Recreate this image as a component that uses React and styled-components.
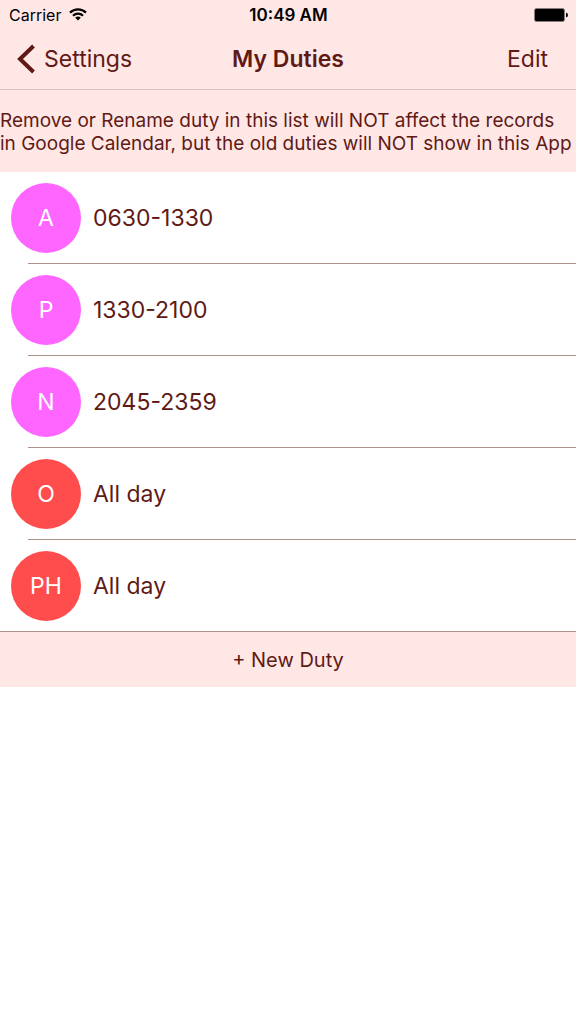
import React from "react";
import styled, { createGlobalStyle } from "styled-components";

const GlobalStyle = createGlobalStyle`
  * { box-sizing: border-box; }
  body {
    margin: 0;
    background: #fff;
    color: #5f1a15;
    font-family: Inter, "Liberation Sans", sans-serif;
  }
  button { font: inherit; color: inherit; border: 0; padding: 0; background: none; cursor: pointer; }
`;

const Header = styled.header`
  background: #ffe7e6;
  border-bottom: 1px solid #d9c3c3;
`;

const StatusBar = styled.div`
  display: grid;
  grid-template-columns: 1fr auto 1fr;
  align-items: center;
  height: 29px;
  padding: 0 8px 0 9px;
  color: #000;
  font-size: 16px;
  line-height: 20px;
`;

const Carrier = styled.div`
  display: flex;
  align-items: center;
  gap: 8px;
`;

const Clock = styled.time`
  font-size: 17px;
  font-weight: 600;
`;

const Battery = styled.svg`
  justify-self: end;
`;

const NavBar = styled.nav`
  display: grid;
  grid-template-columns: 1fr auto 1fr;
  align-items: center;
  height: 60px;
  padding: 0 16px;
  font-size: 23px;
  line-height: 28px;
`;

const BackButton = styled.button`
  display: flex;
  align-items: center;
  gap: 8px;
  justify-self: start;
`;

const EditButton = styled.button`
  && { padding: 0 12px; }
  justify-self: end;
`;

const Title = styled.h1`
  margin: 0;
  font-size: 23px;
  font-weight: 600;
`;

const Notice = styled.p`
  margin: 0;
  padding: 19px 2px 17px 0;
  background: #ffe7e6;
  font-size: 19px;
  line-height: 23px;
`;

const DutyList = styled.ul`
  margin: 0;
  padding: 0;
  list-style: none;
`;

const DutyItem = styled.li`
  &::after {
    content: "";
    display: block;
    height: 1px;
    margin-left: 28px;
    background: #b08f8f;
  }
  &:last-child::after { margin-left: 0; }
`;

const DutyRow = styled.div`
  display: flex;
  align-items: center;
  gap: 12px;
  padding: 11px 11px 10px;
  font-size: 23px;
`;

const Badge = styled.span`
  display: grid;
  place-items: center;
  width: 70px;
  height: 70px;
  border-radius: 50%;
  background: ${(p) => p.$color};
  color: #fff;
`;

const NewDuty = styled.button`
  display: block;
  width: 100%;
  height: 55px;
  && {
    background: #ffe7e6;
    font-size: 20px;
  }
`;

const duties = [
  { code: "A", hours: "0630-1330", color: "#ff66ff" },
  { code: "P", hours: "1330-2100", color: "#ff66ff" },
  { code: "N", hours: "2045-2359", color: "#ff66ff" },
  { code: "O", hours: "All day", color: "#ff4d4d" },
  { code: "PH", hours: "All day", color: "#ff4d4d" },
];

export default function App() {
  return (
    <>
      <GlobalStyle />
      <Header>
        <StatusBar>
          <Carrier>
            Carrier
            <svg width="18" height="13" viewBox="0 0 18 13" fill="none" stroke="#000" strokeWidth="2.2" aria-hidden="true">
              <path d="M1 4.6a11.4 11.4 0 0 1 16 0M4 7.7a7.2 7.2 0 0 1 10 0" />
              <path d="M9 12.6 6.2 9.8a4 4 0 0 1 5.6 0z" fill="#000" stroke="none" />
            </svg>
          </Carrier>
          <Clock>10:49 AM</Clock>
          <Battery width="34" height="14" viewBox="0 0 34 14" aria-hidden="true">
            <rect x="0.5" y="0.5" width="30" height="13" rx="2" fill="#000" stroke="#8a7c7c" />
            <path d="M32 4.5q2 .5 2 2.5t-2 2.5z" fill="#000" />
          </Battery>
        </StatusBar>
        <NavBar>
          <BackButton>
            <svg width="20" height="30" viewBox="0 0 20 30" fill="none" stroke="#5f1a15" strokeWidth="4" aria-hidden="true">
              <path d="M17.5 2 4 15l13.5 13" />
            </svg>
            Settings
          </BackButton>
          <Title>My Duties</Title>
          <EditButton>Edit</EditButton>
        </NavBar>
      </Header>
      <main>
        <Notice>
          Remove or Rename duty in this list will NOT affect the records in Google Calendar, but the old duties will NOT show in this App
        </Notice>
        <DutyList>
          {duties.map((duty) => (
            <DutyItem key={duty.code}>
              <DutyRow>
                <Badge $color={duty.color}>{duty.code}</Badge>
                {duty.hours}
              </DutyRow>
            </DutyItem>
          ))}
        </DutyList>
        <NewDuty>+ New Duty</NewDuty>
      </main>
    </>
  );
}
